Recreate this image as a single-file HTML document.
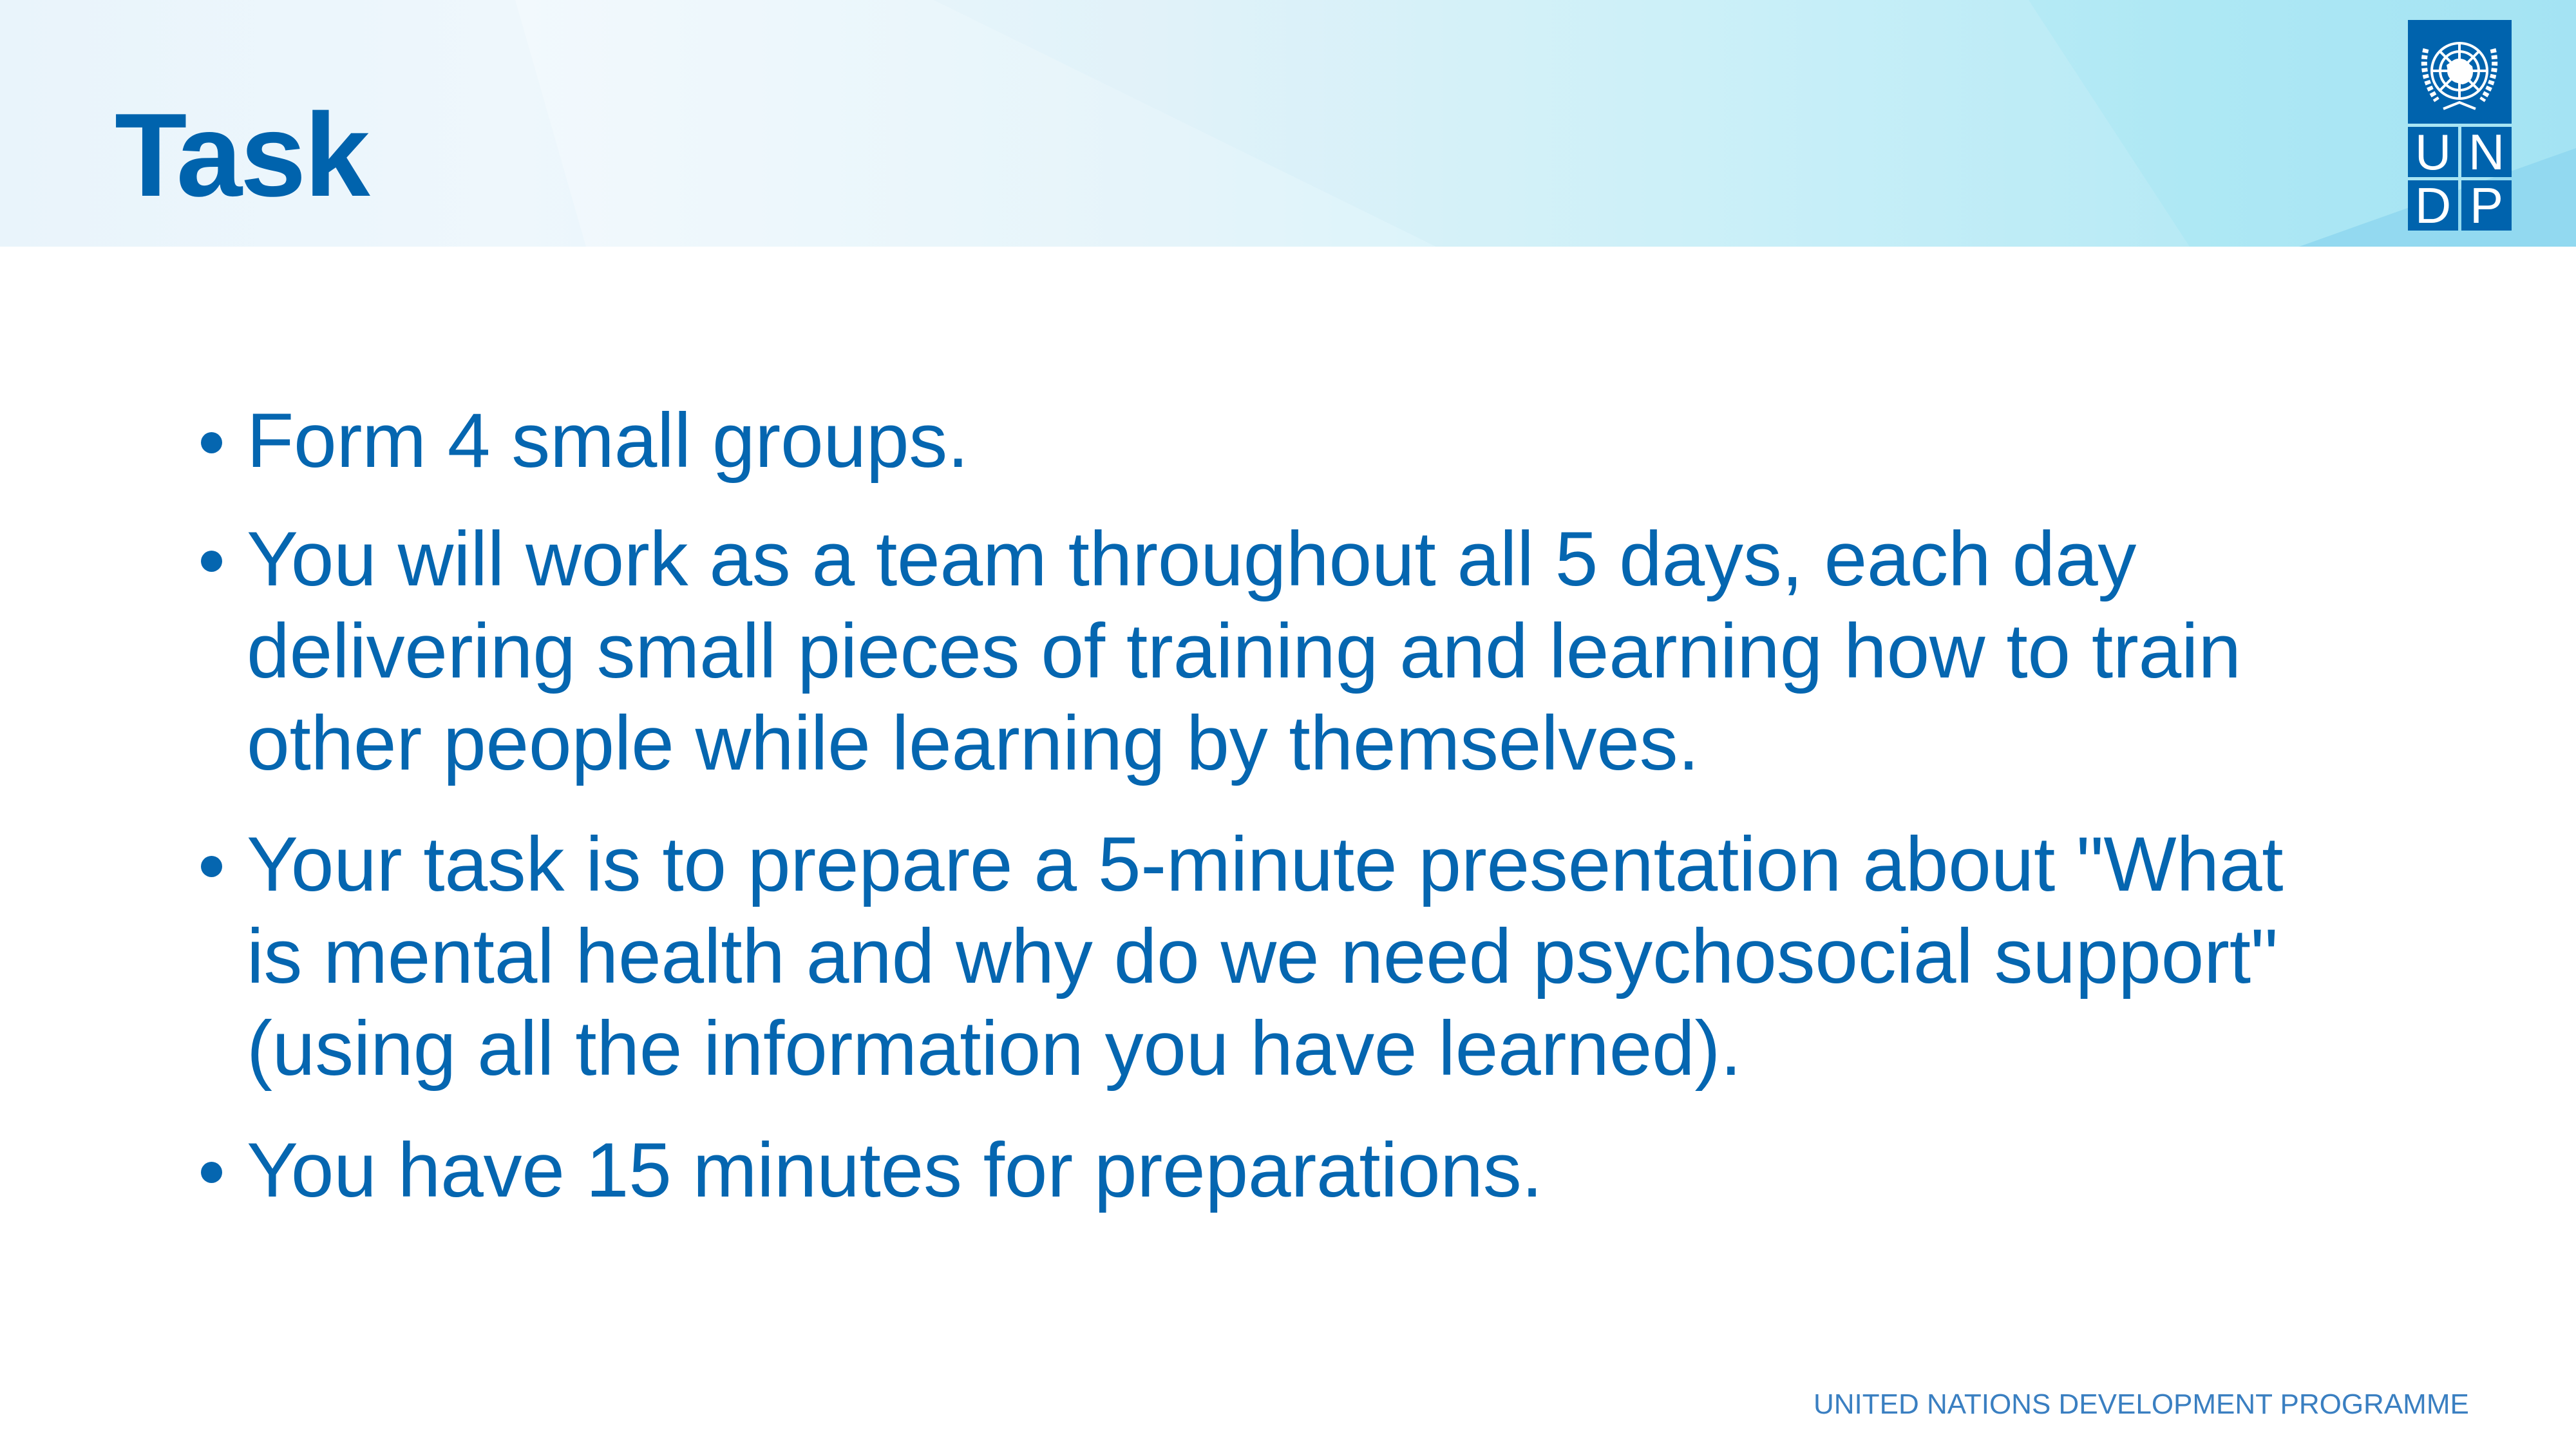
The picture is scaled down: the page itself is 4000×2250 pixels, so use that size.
<!DOCTYPE html>
<html><head><meta charset="utf-8"><style>
html,body{margin:0;padding:0}
body{width:4000px;height:2250px;position:relative;overflow:hidden;background:#fff;font-family:"Liberation Sans",sans-serif}
.hdr{position:absolute;left:0;top:0;width:4000px;height:383px;background:linear-gradient(90deg,#e9f4fb 0%,#eef7fc 20%,#ddf1f9 45%,#c6eef8 65%,#aee8f4 85%,#a4e3f3 100%);overflow:hidden}
.t{position:absolute;left:178px;top:148px;font-weight:bold;font-size:184px;color:#0063ad;letter-spacing:-3px;line-height:1}
.b{position:absolute;left:383px;font-size:120px;color:#0566b0;white-space:nowrap;line-height:1;letter-spacing:-0.3px}
.d{position:absolute;left:312px;width:33px;height:33px;border-radius:50%;background:#0566b0}
.f{position:absolute;left:2816px;top:2156px;font-size:44px;color:#3a7fc1;white-space:nowrap}
.c{position:absolute;background:#0063ad;color:#fff;font-size:78px;text-align:center;line-height:78px}
</style></head><body>
<div class="hdr">
<svg width="4000" height="383" style="position:absolute;left:0;top:0">
<polygon points="800,0 1450,0 2230,383 910,383" fill="#ffffff" opacity="0.25"/>
<polygon points="1450,0 3150,0 3400,383 2230,383" fill="#ffffff" opacity="0.12"/>
<polygon points="4000,230 4000,383 3570,383" fill="#8dd6ef" opacity="0.8"/>
</svg>
</div>
<div class="c" style="left:3739px;top:31px;width:161px;height:161px">
<svg width="161" height="161" viewBox="0 0 161 161">
<g fill="none" stroke="#fff" stroke-width="4">
<circle cx="80" cy="79" r="43"/><circle cx="80" cy="79" r="30"/><circle cx="80" cy="79" r="17"/>
<line x1="80" y1="36" x2="80" y2="122"/><line x1="37" y1="79" x2="123" y2="79"/>
<line x1="50" y1="49" x2="110" y2="109"/><line x1="110" y1="49" x2="50" y2="109"/>
<path d="M28,45 Q18,85 45,125 M132,45 Q142,85 115,125" stroke-width="9" stroke-dasharray="6 4"/>
<path d="M55,138 L80,128 L105,138"/>
</g>
<path d="M60,70 Q80,55 100,72 Q105,95 85,100 Q65,98 60,70Z" fill="#fff"/>
</svg></div>
<div class="c" style="left:3739px;top:197px;width:78px;height:78px">U</div>
<div class="c" style="left:3822px;top:197px;width:78px;height:78px">N</div>
<div class="c" style="left:3739px;top:280px;width:78px;height:78px">D</div>
<div class="c" style="left:3822px;top:280px;width:78px;height:78px">P</div>
<div class="t">Task</div>
<div class="d" style="top:671px"></div>
<div class="b" style="top:624px">Form 4 small groups.</div>
<div class="d" style="top:855px"></div>
<div class="b" style="top:808px">You will work as a team throughout all 5 days, each day</div>
<div class="b" style="top:951px">delivering small pieces of training and learning how to train</div>
<div class="b" style="top:1094px">other people while learning by themselves.</div>
<div class="d" style="top:1329px"></div>
<div class="b" style="top:1282px">Your task is to prepare a 5-minute presentation about "What</div>
<div class="b" style="top:1425px">is mental health and why do we need psychosocial support"</div>
<div class="b" style="top:1568px">(using all the information you have learned).</div>
<div class="d" style="top:1804px"></div>
<div class="b" style="top:1757px">You have 15 minutes for preparations.</div>
<div class="f">UNITED NATIONS DEVELOPMENT PROGRAMME</div>
</body></html>
